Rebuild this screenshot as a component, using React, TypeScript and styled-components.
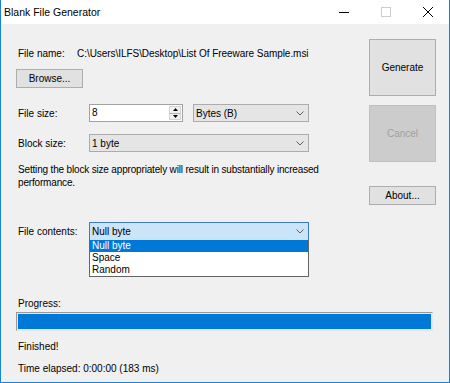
import React from "react";
import styled, { createGlobalStyle } from "styled-components";

const Global = createGlobalStyle`
  html, body { margin: 0; padding: 0; background: #ffffff; }
  body { font-family: "Liberation Sans", Arial, sans-serif; font-size: 10px; color: #000; }
  * { box-sizing: border-box; }
`;

const Window = styled.div`
  width: 450px;
  height: 383px;
  border: 1px solid #1883d7;
  border-top: none;
  display: flex;
  flex-direction: column;
  background: #f0f0f0;
  overflow: hidden;
`;

const TitleBar = styled.div`
  height: 24px;
  background: #ffffff;
  display: flex;
  align-items: center;
  flex-shrink: 0;
`;

const Title = styled.div`
  flex: 1;
  padding-left: 3px;
  font-size: 10.5px;
  line-height: 14px;
  margin-top: -1px;
  color: #000;
`;

const Caption = styled.div`
  width: 42px;
  height: 24px;
  display: flex;
  align-items: center;
  justify-content: center;
`;

const Client = styled.div`
  flex: 1;
  display: flex;
  flex-direction: column;
  padding-left: 15px;
`;

const TopSection = styled.div`
  display: flex;
  height: 217px;
  align-items: flex-start;
`;

const LeftCol = styled.div`
  width: 293px;
  display: flex;
  flex-direction: column;
`;

const RightCol = styled.div`
  margin-left: 60px;
  margin-top: 15px;
  width: 67px;
  display: flex;
  flex-direction: column;
`;

const Row = styled.div<{ $mt: number; $h?: number }>`
  display: flex;
  align-items: center;
  margin-top: ${(p) => p.$mt}px;
  height: ${(p) => (p.$h ? `${p.$h}px` : "auto")};
  white-space: nowrap;
`;

const Label = styled.span<{ $w?: number }>`
  display: inline-block;
  width: ${(p) => (p.$w ? `${p.$w}px` : "auto")};
  padding-left: 2px;
  line-height: 13px;
  white-space: nowrap;
  flex-shrink: 0;
`;

const PathText = styled.span`
  line-height: 13px;
  white-space: nowrap;
  flex-shrink: 0;
  letter-spacing: -0.05px;
`;

const Text = styled.div<{ $mt: number; $tight?: boolean }>`
  margin-top: ${(p) => p.$mt}px;
  padding-left: 2px;
  line-height: 13px;
  white-space: nowrap;
  letter-spacing: ${(p) => (p.$tight ? "-0.17px" : "normal")};
`;

const Button = styled.div<{ $w: number; $h: number; $mt: number; $disabled?: boolean }>`
  width: ${(p) => p.$w}px;
  height: ${(p) => p.$h}px;
  margin-top: ${(p) => p.$mt}px;
  border: 1px solid ${(p) => (p.$disabled ? "#bfbfbf" : "#adadad")};
  background: ${(p) => (p.$disabled ? "#cccccc" : "#e1e1e1")};
  color: ${(p) => (p.$disabled ? "#a0a0a0" : "#000")};
  display: flex;
  align-items: center;
  justify-content: center;
  line-height: 13px;
  flex-shrink: 0;
`;

const Spinner = styled.div`
  width: 94px;
  height: 18px;
  border: 1px solid #a2a2a2;
  background: #ffffff;
  display: flex;
`;

const SpinInput = styled.div`
  flex: 1;
  padding-left: 2px;
  line-height: 15px;
`;

const SpinButtons = styled.div`
  width: 12px;
  display: flex;
  flex-direction: column;
  margin: 1px 1px 1px 0;
`;

const SpinButton = styled.div<{ $top?: boolean }>`
  flex: 1;
  background: #f0f0f0;
  border: 1px solid #d4d4d4;
  ${(p) => (p.$top ? "border-bottom-color: #b0b0b0;" : "border-top: none;")}
  display: flex;
  align-items: center;
  justify-content: center;
`;

const Combo = styled.div<{ $w: number; $h?: number; $active?: boolean; $ml?: number }>`
  position: relative;
  width: ${(p) => p.$w}px;
  height: ${(p) => p.$h ?? 18}px;
  margin-left: ${(p) => p.$ml ?? 0}px;
  border: 1px solid ${(p) => (p.$active ? "#3e7ac1" : "#acacac")};
  background: ${(p) => (p.$active ? "#cce4f7" : "#e5e5e5")};
  display: flex;
  align-items: center;
  padding-left: 2px;
  line-height: 13px;
  flex-shrink: 0;
`;

const ComboValue = styled.span`
  flex: 1;
`;

const Chevron = styled.svg`
  margin-right: 4px;
`;

const DropList = styled.div`
  position: absolute;
  left: -1px;
  right: -1px;
  top: 100%;
  border: 1px solid #646464;
  border-top: none;
  background: #ffffff;
  z-index: 5;
`;

const DropItem = styled.div<{ $selected?: boolean }>`
  height: 12px;
  line-height: 12px;
  padding-left: 2px;
  background: ${(p) => (p.$selected ? "#0078d7" : "#ffffff")};
  color: ${(p) => (p.$selected ? "#ffffff" : "#000000")};
`;

const ProgressBar = styled.div`
  margin-top: 2px;
  width: 417px;
  height: 19px;
  border: 1px solid;
  border-color: #9a9a9a #e6e6e6 #e6e6e6 #9a9a9a;
  padding: 1px;
  background: #e6e6e6;
`;

const ProgressFill = styled.div`
  width: 100%;
  height: 100%;
  background: #0078d7;
`;

const ChevronIcon = () => (
  <Chevron width="8" height="5" viewBox="0 0 8 5">
    <polyline points="0.5,0.5 4,4 7.5,0.5" fill="none" stroke="#606060" strokeWidth="1" />
  </Chevron>
);

export default function App() {
  return (
    <>
      <Global />
      <Window>
        <TitleBar>
          <Title>Blank File Generator</Title>
          <Caption>
            <svg width="10" height="10" viewBox="0 0 10 10">
              <line x1="0" y1="5.5" x2="10" y2="5.5" stroke="#000" strokeWidth="1" />
            </svg>
          </Caption>
          <Caption>
            <svg width="10" height="10" viewBox="0 0 10 10">
              <rect x="0.5" y="0.5" width="9" height="9" fill="none" stroke="#cccccc" strokeWidth="1" />
            </svg>
          </Caption>
          <Caption>
            <svg width="10" height="10" viewBox="0 0 10 10">
              <line x1="0" y1="0" x2="10" y2="10" stroke="#000" strokeWidth="1" />
              <line x1="10" y1="0" x2="0" y2="10" stroke="#000" strokeWidth="1" />
            </svg>
          </Caption>
        </TitleBar>
        <Client>
          <TopSection>
            <LeftCol>
              <Row $mt={23}>
                <Label $w={61}>File name:</Label>
                <PathText>C:\Users\ILFS\Desktop\List Of Freeware Sample.msi</PathText>
              </Row>
              <Button $w={67} $h={19} $mt={9}>Browse...</Button>
              <Row $mt={16} $h={18}>
                <Label $w={73}>File size:</Label>
                <Spinner>
                  <SpinInput>8</SpinInput>
                  <SpinButtons>
                    <SpinButton $top>
                      <svg width="5" height="3" viewBox="0 0 5 3">
                        <polygon points="0,3 2.5,0 5,3" fill="#000" />
                      </svg>
                    </SpinButton>
                    <SpinButton>
                      <svg width="5" height="3" viewBox="0 0 5 3">
                        <polygon points="0,0 2.5,3 5,0" fill="#000" />
                      </svg>
                    </SpinButton>
                  </SpinButtons>
                </Spinner>
                <Combo $w={116} $ml={10}>
                  <ComboValue>Bytes (B)</ComboValue>
                  <ChevronIcon />
                </Combo>
              </Row>
              <Row $mt={12} $h={18}>
                <Label $w={73}>Block size:</Label>
                <Combo $w={220}>
                  <ComboValue>1 byte</ComboValue>
                  <ChevronIcon />
                </Combo>
              </Row>
              <Text $mt={11} $tight>
                Setting the block size appropriately will result in substantially increased
                <br />
                performance.
              </Text>
              <Row $mt={33} $h={19}>
                <Label $w={73}>File contents:</Label>
                <Combo $w={220} $h={19} $active>
                  <ComboValue>Null byte</ComboValue>
                  <ChevronIcon />
                  <DropList>
                    <DropItem $selected>Null byte</DropItem>
                    <DropItem>Space</DropItem>
                    <DropItem>Random</DropItem>
                  </DropList>
                </Combo>
              </Row>
            </LeftCol>
            <RightCol>
              <Button $w={67} $h={57} $mt={0}>Generate</Button>
              <Button $w={67} $h={57} $mt={9} $disabled>Cancel</Button>
              <Button $w={67} $h={19} $mt={24}>About...</Button>
            </RightCol>
          </TopSection>
          <Text $mt={56}>Progress:</Text>
          <ProgressBar>
            <ProgressFill />
          </ProgressBar>
          <Text $mt={9}>Finished!</Text>
          <Text $mt={9}>Time elapsed: 0:00:00 (183 ms)</Text>
        </Client>
      </Window>
    </>
  );
}
